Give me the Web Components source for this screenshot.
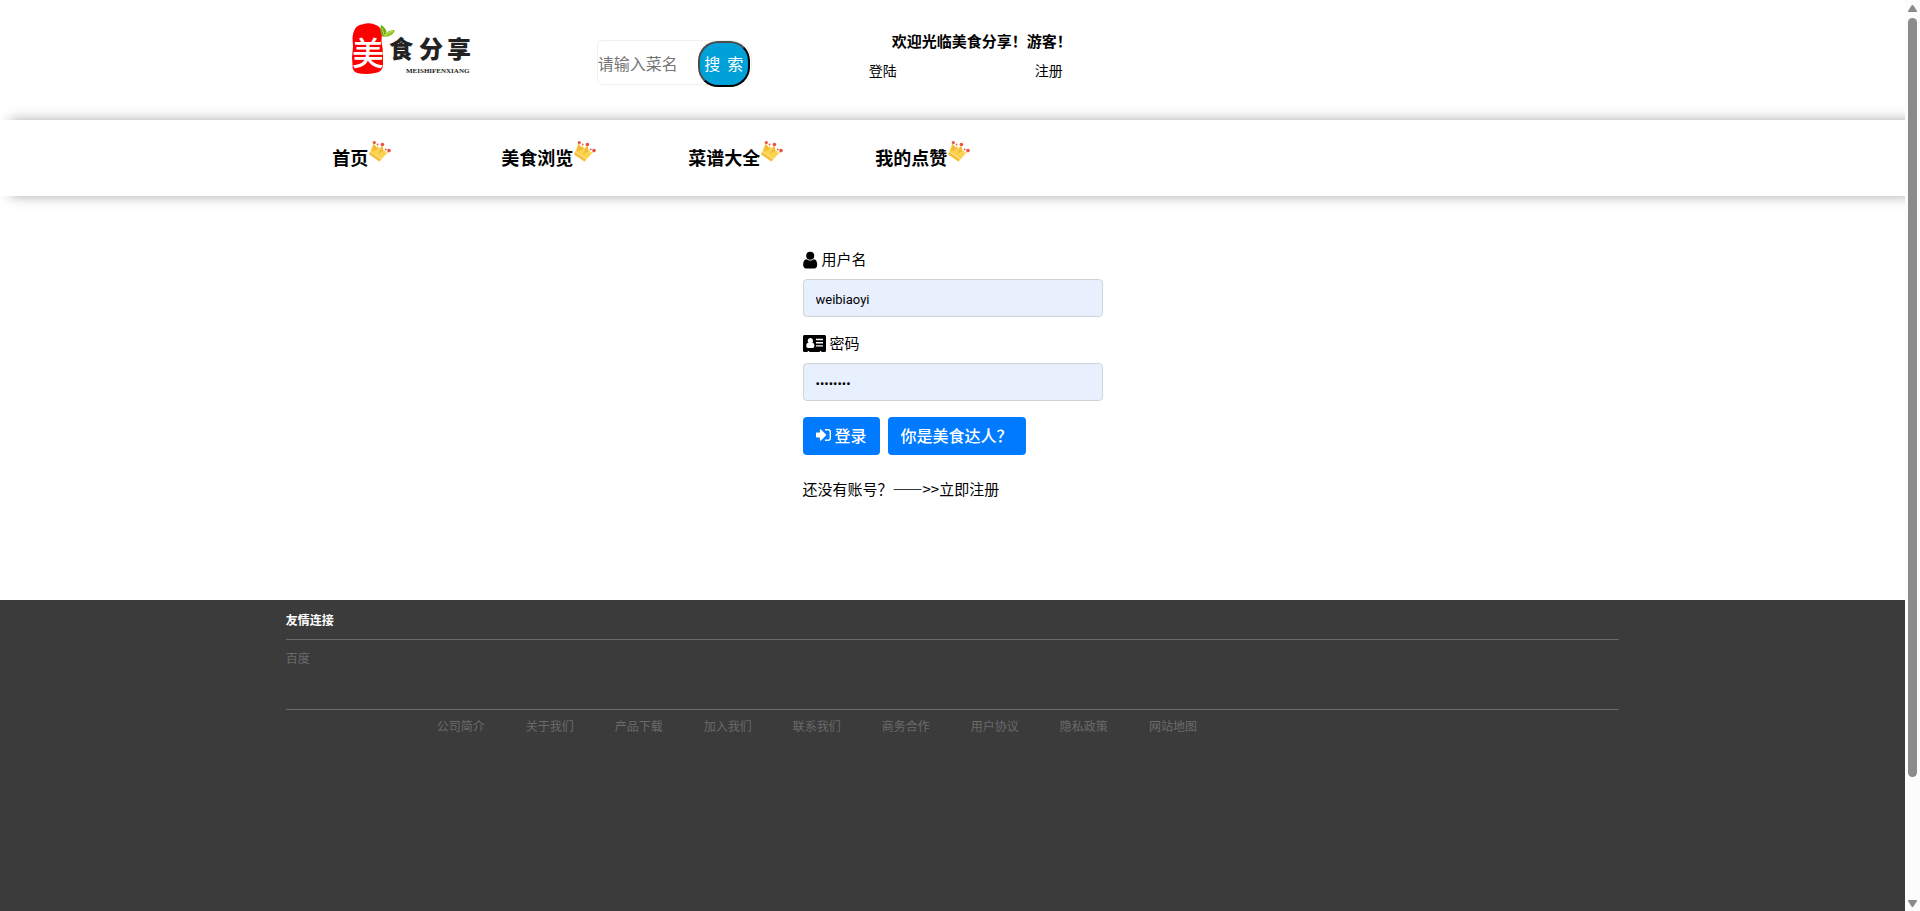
<!DOCTYPE html>
<html lang="zh-CN">
<head>
<meta charset="utf-8">
<meta name="viewport" content="width=device-width, initial-scale=1">
<title>美食分享</title>
<style>
html, body { margin: 0; }
body {
    background: #fff;
    color: #000;
    font: 15px/24px "Noto Sans CJK SC", sans-serif;
}
</style>
</head>
<body>

<ms-page>
    <ms-header>
        <ms-logo slot="logo"></ms-logo>
        <ms-search></ms-search>
        <ms-visitor name="游客">
            <a href="#login">登陆</a>
            <a href="#register">注册</a>
        </ms-visitor>
    </ms-header>
    <ms-nav>
        <ms-nav-item href="#home">首页</ms-nav-item>
        <ms-nav-item href="#browse">美食浏览</ms-nav-item>
        <ms-nav-item href="#recipes">菜谱大全</ms-nav-item>
        <ms-nav-item href="#likes">我的点赞</ms-nav-item>
    </ms-nav>
    <ms-login></ms-login>
    <ms-footer>
        <span slot="title">友情连接</span>
        <a slot="friends" href="#baidu">百度</a>
        <a href="#about">公司简介</a>
        <a href="#us">关于我们</a>
        <a href="#download">产品下载</a>
        <a href="#join">加入我们</a>
        <a href="#contact">联系我们</a>
        <a href="#business">商务合作</a>
        <a href="#terms">用户协议</a>
        <a href="#privacy">隐私政策</a>
        <a href="#map">网站地图</a>
    </ms-footer>
</ms-page>

<script>
function define(name, html, connected) {
    customElements.define(name, class extends HTMLElement {
        constructor() {
            super();
            this.attachShadow({ mode: 'open' }).innerHTML = html;
        }
        connectedCallback() {
            connected && connected.call(this, this.shadowRoot);
        }
    });
}

// page with its own scroll bar on the right
define('ms-page', `
<style>
:host {
    display: grid;
    grid-template-columns: minmax(0, 1fr) 15px;
    height: 100vh;
}
main {
    display: flex;
    flex-direction: column;
    overflow: hidden;
}
#bar {
    display: flex;
    flex-direction: column;
    align-items: center;
    background: #fcfcfc;
    padding: 5px 0 4px;
    box-sizing: border-box;
    min-height: 0;
}
#track {
    flex: 1;
    align-self: stretch;
    margin: 6px 3px;
    min-height: 0;
}
#thumb {
    height: 86.7%;
    border-radius: 5px;
    background: #8b8b8b;
}
svg { display: block; fill: #8b8b8b; flex: none; }
</style>
<main><slot></slot></main>
<div id="bar" aria-hidden="true">
    <svg width="9" height="7" viewBox="0 0 9 7"><path d="M4.5 0q.6 0 1 .6L9 6q.2 1-.6 1H.6Q-.2 7 0 6L3.500.6Q3.900 0 4.500 0z"/></svg>
    <div id="track"><div id="thumb"></div></div>
    <svg width="9" height="7" viewBox="0 0 9 7"><path d="M4.5 7q.6 0 1-.6L9 1q.2-1-.6-1H.6Q-.2 0 0 1l3.500 5.400q.4.6 1 .6z"/></svg>
</div>
`);

define('ms-header', `
<style>
:host {
    display: flex;
    align-items: flex-start;
    height: 120px;
    padding-left: calc(15% + 64px);
    box-sizing: border-box;
}
::slotted(*) { flex: none; }
::slotted(ms-logo) { margin: 20px 123px 0 0; }
::slotted(ms-search) { margin: 40px 117px 0 0; }
::slotted(ms-visitor) { margin-top: 29px; }
</style>
<slot name="logo"></slot>
<slot></slot>
`);

define('ms-logo', `
<style>
:host { display: block; }
svg { display: block; }
</style>
<svg width="124" height="56" viewBox="0 0 124 56" role="img" aria-label="美食分享">
    <path fill="#f00" d="M5 9Q7 5 12 4.500Q20 2 26 5Q31 7 32 13L31.500 21Q33 29 33 36L33 46Q32 52 25 53Q16 55 7 53Q2 51 2.500 45L2 37L3 27L2.500 18Q3 12 5 9z"/>
    <path fill="#6fae0e" d="M33 17Q29 12 31 5Q36 8 36.500 12L35 16z"/>
    <path fill="#94c51f" d="M34 17Q37 9 45 10Q43 17 34 17z"/>
    <path fill="none" stroke="#dff0b0" stroke-width=".6" d="M32 8Q33 12 34.500 16M35 15.500Q38 12 43 11"/>
    <text x="2" y="45" font-size="32" font-weight="500" fill="#fff">美</text>
    <text x="39 69 97" y="38" font-size="24" font-weight="900" fill="#222">食分享</text>
    <text x="56" y="53" font-family="Liberation Serif, serif" font-size="7" font-weight="700" fill="#222">MEISHIFENXIANG</text>
</svg>
`);

define('ms-search', `
<style>
:host { display: block; }
form {
    display: flex;
    width: 155px;
    height: 45px;
    box-sizing: border-box;
    border: 1px solid #f0f0f0;
    border-radius: 6px 20px 20px 6px;
}
input {
    flex: 1;
    min-width: 0;
    border: 0;
    padding: 0;
    background: none;
    outline: 0;
    font: inherit;
    font-size: 16px;
}
input::placeholder { color: #757575; }
button {
    flex: none;
    width: 52px;
    height: 46px;
    margin-right: 1px;
    padding: 0 0 2px;
    border: 2px outset #000;
    border-color: #4c4c4c #000 #000 #4c4c4c;
    border-radius: 20px;
    background: #00a1d9;
    color: #fff;
    font: inherit;
    font-size: 16px;
    white-space: nowrap;
}
</style>
<form>
    <input type="text" placeholder="请输入菜名" aria-label="请输入菜名">
    <button type="button">搜&nbsp; 索</button>
</form>
`);

define('ms-visitor', `
<style>
:host { display: block; width: 194px; }
p { margin: 0 0 5px 23px; font-weight: 700; white-space: nowrap; }
nav {
    display: flex;
    justify-content: space-between;
    font-size: 14px;
}
::slotted(a) { color: inherit; text-decoration: none; }
</style>
<p></p>
<nav><slot></slot></nav>
`, function (root) {
    root.querySelector('p').textContent = '欢迎光临美食分享！' + this.getAttribute('name') + '！';
});

define('ms-nav', `
<style>
:host {
    display: block;
    background: #fff;
    box-shadow: 10px 0 12px #aaa;
}
nav {
    display: grid;
    grid-template-columns: repeat(4, 187px);
    height: 76px;
    padding: 0 0 2px calc(15% - 17px);
    box-sizing: border-box;
    align-items: center;
}
</style>
<nav><slot></slot></nav>
`);

define('ms-nav-item', `
<style>
:host { display: block; }
a {
    display: flex;
    justify-content: center;
    align-items: flex-start;
    color: inherit;
    font-size: 18px;
    font-weight: 700;
    line-height: 36px;
    text-decoration: none;
}
svg { display: block; }
</style>
<a>
    <slot></slot>
    <svg width="24" height="24" viewBox="0 0 24 24" aria-hidden="true">
        <path fill="#fbd34e" d="M5.500 4.500L8.500 8.500L9.500 6.500L11 9.500L14.200 6.700L15.500 12L17.500 11L17 13.500L20.500 12.500L11.500 22.500L1.300 15z"/>
        <path fill="#f3b93a" d="M5.500 4.500L8.500 8.500L11 9.500L4 12.500zM14.200 6.700L15.500 12L10 15z"/>
        <path fill="#f6bd3a" d="M2 13L13 20.500L11.500 22.500L1.200 15.500z"/>
        <path fill="none" stroke="#fdeaa0" stroke-width=".8" d="M2.300 12.800L13.200 20"/>
        <g fill="#e8503f">
            <circle cx="6.300" cy="3.500" r="1.600"/>
            <circle cx="14.400" cy="5.500" r="1.800"/>
            <circle cx="21" cy="11.600" r="1.800"/>
            <circle cx="9.600" cy="5.400" r=".9"/>
            <circle cx="17.800" cy="10.300" r=".9"/>
        </g>
    </svg>
</a>
`, function (root) {
    root.querySelector('a').href = this.getAttribute('href');
});

define('ms-login', `
<style>
:host {
    display: block;
    width: 300px;
    height: 404px;
    flex: none;
    margin: 0 auto;
    padding-top: 51px;
    box-sizing: border-box;
}
label {
    display: flex;
    align-items: center;
    gap: 4px;
    margin-bottom: 8px;
}
label svg { margin-top: 2px; }
input {
    display: block;
    width: 100%;
    height: 38px;
    box-sizing: border-box;
    margin-bottom: 14px;
    padding: 8px 12px 6px;
    border: 1px solid #ced4da;
    border-radius: 4px;
    background: #e8f0fe;
    color: #000;
    font: 13px/22px Roboto, sans-serif;
}
#buttons {
    display: flex;
    gap: 8px;
    margin: 16px 0 22px;
}
button {
    display: flex;
    align-items: center;
    gap: 4px;
    height: 38px;
    padding: 0 13px 2px;
    border: 0;
    border-radius: 4px;
    background: #007bff;
    color: #fff;
    font: inherit;
    font-size: 16px;
    font-weight: 500;
    white-space: nowrap;
}
p { margin: 0; }
p a { color: inherit; text-decoration: none; }
svg { display: block; fill: currentColor; flex: none; }
</style>
<form>
    <label for="user">
        <svg width="15" height="18" viewBox="0 0 15 18"><path d="M14.200 14.300c0 2-1.300 3.200-3 3.200h-8c-1.700 0-3-1.200-3-3.200 0-2.700.6-6 3.500-6 .9.800 2.100 1.300 3.500 1.300s2.600-.5 3.500-1.300c2.900 0 3.500 3.300 3.500 6zM11.200 4.800a4 4 0 1 1-8 0 4 4 0 0 1 8 0z"/></svg>
        用户名
    </label>
    <input id="user" type="text" value="weibiaoyi">
    <label for="pass">
        <svg width="23" height="18" viewBox="0 0 23 18"><path fill-rule="evenodd" d="M1.600 0h19.800C22.300 0 23 .7 23 1.600v13.800c0 .9-.7 1.600-1.600 1.600h-3.100v-1h-1.500v1H6.200v-1H4.700v1H1.600C.7 17 0 16.300 0 15.400V1.600C0 .7.7 0 1.600 0zM7.300 3a2.800 2.800 0 0 0-1.900 4.700C3.800 7.700 3.300 9.400 3.300 11c0 1.200.8 1.900 1.700 1.900h4.700c1 0 1.700-.7 1.700-1.900 0-1.600-.5-3.300-2.100-3.300A2.800 2.800 0 0 0 7.300 3zM13 3.800v1.400h7V3.800zM13 7v1.400h7V7zM13 10.200v1.400h7v-1.400z"/></svg>
        密码
    </label>
    <input id="pass" type="password" value="weibiao1">
    <div id="buttons">
        <button type="button">
            <svg width="15" height="14" viewBox="0 0 15 14"><path d="M10.200 7c0 .2-.1.300-.2.500l-5 5c-.5.400-1.100.1-1.100-.5V9.400H.6C.3 9.400 0 9.100 0 8.800V5.200c0-.3.3-.6.6-.6h3.300V2c0-.6.6-.9 1.100-.5l5 5c.1.200.2.300.2.500z"/><path d="M9 1h3a3 3 0 0 1 3 3v6a3 3 0 0 1-3 3H9v-1.400h3c.9 0 1.600-.7 1.600-1.600V4c0-.9-.7-1.600-1.600-1.600H9z"/></svg>
            登录
        </button>
        <button type="button">你是美食达人？</button>
    </div>
    <p>还没有账号？——&gt;&gt;<a href="#register">立即注册</a></p>
</form>
`);

define('ms-footer', `
<style>
:host {
    display: block;
    flex: 1 0 auto;
    background: #3b3b3b;
    color: #6a6a6a;
    font-size: 12px;
}
section { margin: 0 15%; }
h2 {
    margin: 0;
    padding: 8px 0 7px;
    color: #fff;
    font-size: 12px;
    line-height: 24px;
    border-bottom: 1px solid #6a6a6a;
}
#friends {
    height: 62px;
    padding-top: 6px;
    box-sizing: border-box;
    margin-bottom: 7px;
}
#links {
    display: flex;
    gap: 41px;
    padding: 4px 0 0 151px;
    border-top: 1px solid #6a6a6a;
    white-space: nowrap;
}
::slotted(a) { color: inherit; text-decoration: none; }
</style>
<section>
    <h2><slot name="title"></slot></h2>
    <div id="friends"><slot name="friends"></slot></div>
    <div id="links"><slot></slot></div>
</section>
`);
</script>
</body>
</html>
